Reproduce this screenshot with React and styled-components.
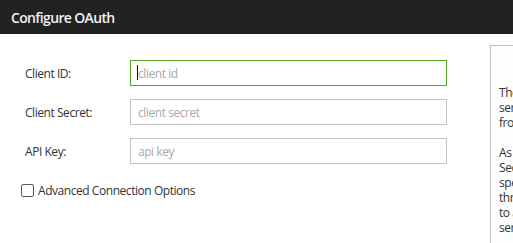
import React from "react";
import styled, { createGlobalStyle } from "styled-components";

const Global = createGlobalStyle`
  html, body { margin: 0; padding: 0; background: #fff; overflow: hidden; }
  body { font-family: "Open Sans", "Noto Sans", sans-serif; }
`;

const Page = styled.div`
  width: 513px;
  height: 243px;
  overflow: hidden;
  display: flex;
  flex-direction: column;
`;

const Header = styled.div`
  height: 34px;
  background: #222222;
  color: #f0f0f0;
  display: flex;
  align-items: center;
  padding-left: 11px;
  font-size: 14px;
  font-weight: 600;
  letter-spacing: -0.65px;
  flex-shrink: 0;
`;

const Body = styled.div`
  display: flex;
  flex: 1;
  min-height: 0;
`;

const Form = styled.div`
  width: 490px;
  flex-shrink: 0;
  padding-top: 26px;
  box-sizing: border-box;
  display: flex;
  flex-direction: column;
`;

const Row = styled.div`
  display: flex;
  align-items: center;
  height: 26px;
  margin-bottom: 13px;
`;

const Label = styled.label`
  width: 105px;
  padding-left: 25px;
  font-size: 12px;
  letter-spacing: -0.45px;
  color: #333;
`;

const Field = styled.div`
  position: relative;
  width: 317px;
  height: 26px;
`;

const Input = styled.input`
  width: 100%;
  height: 100%;
  box-sizing: border-box;
  border: 1px solid ${(p) => (p.$focused ? "#5aa624" : "#c4c4c4")};
  outline: none;
  padding: 0 0 0 7px;
  font-family: "Open Sans", "Noto Sans", sans-serif;
  font-size: 12px;
  letter-spacing: -0.45px;
  color: #333;
  caret-color: transparent;
  background: #fff;
  &::placeholder { color: #a8a8a8; }
`;

const Caret = styled.span`
  position: absolute;
  left: 7px;
  top: 5px;
  width: 1px;
  height: 15px;
  background: #111;
  pointer-events: none;
`;

const CheckRow = styled.label`
  display: flex;
  align-items: center;
  margin-top: 5px;
  padding-left: 21px;
  font-size: 12px;
  letter-spacing: -0.45px;
  color: #333;
`;

const Box = styled.span`
  width: 13px;
  height: 13px;
  box-sizing: border-box;
  border: 1px solid #5a5a5a;
  border-radius: 2px;
  margin-right: 4px;
`;

const Side = styled.div`
  margin-top: 11px;
  width: 300px;
  flex-shrink: 0;
  border-left: 1px solid #bdbdbd;
  border-top: 1px solid #bdbdbd;
  background: #fdfdfd;
  padding: 39px 0 0 8px;
  box-sizing: border-box;
  font-size: 12px;
  line-height: 15px;
  letter-spacing: -0.45px;
  color: #333;
`;

const Para = styled.p`
  margin: 0 0 15px 0;
`;

export default function App() {
  return (
    <Page>
      <Global />
      <Header>Configure OAuth</Header>
      <Body>
        <Form>
          <Row>
            <Label>Client ID:</Label>
            <Field>
              <Input $focused placeholder="client id" />
              <Caret />
            </Field>
          </Row>
          <Row>
            <Label>Client Secret:</Label>
            <Field>
              <Input placeholder="client secret" />
            </Field>
          </Row>
          <Row>
            <Label>API Key:</Label>
            <Field>
              <Input placeholder="api key" />
            </Field>
          </Row>
          <CheckRow>
            <Box />
            Advanced Connection Options
          </CheckRow>
        </Form>
        <Side>
          <Para>
            The Client ID and Client Secret are<br />
            service specific values obtained<br />
            from the developer console.
          </Para>
          <Para>
            As an alternative to the Client ID and<br />
            Secret, an API key can be<br />
            specified for services that accept<br />
            three-legged authentication, similar<br />
            to a key and token issued by the<br />
            service provider.
          </Para>
        </Side>
      </Body>
    </Page>
  );
}
